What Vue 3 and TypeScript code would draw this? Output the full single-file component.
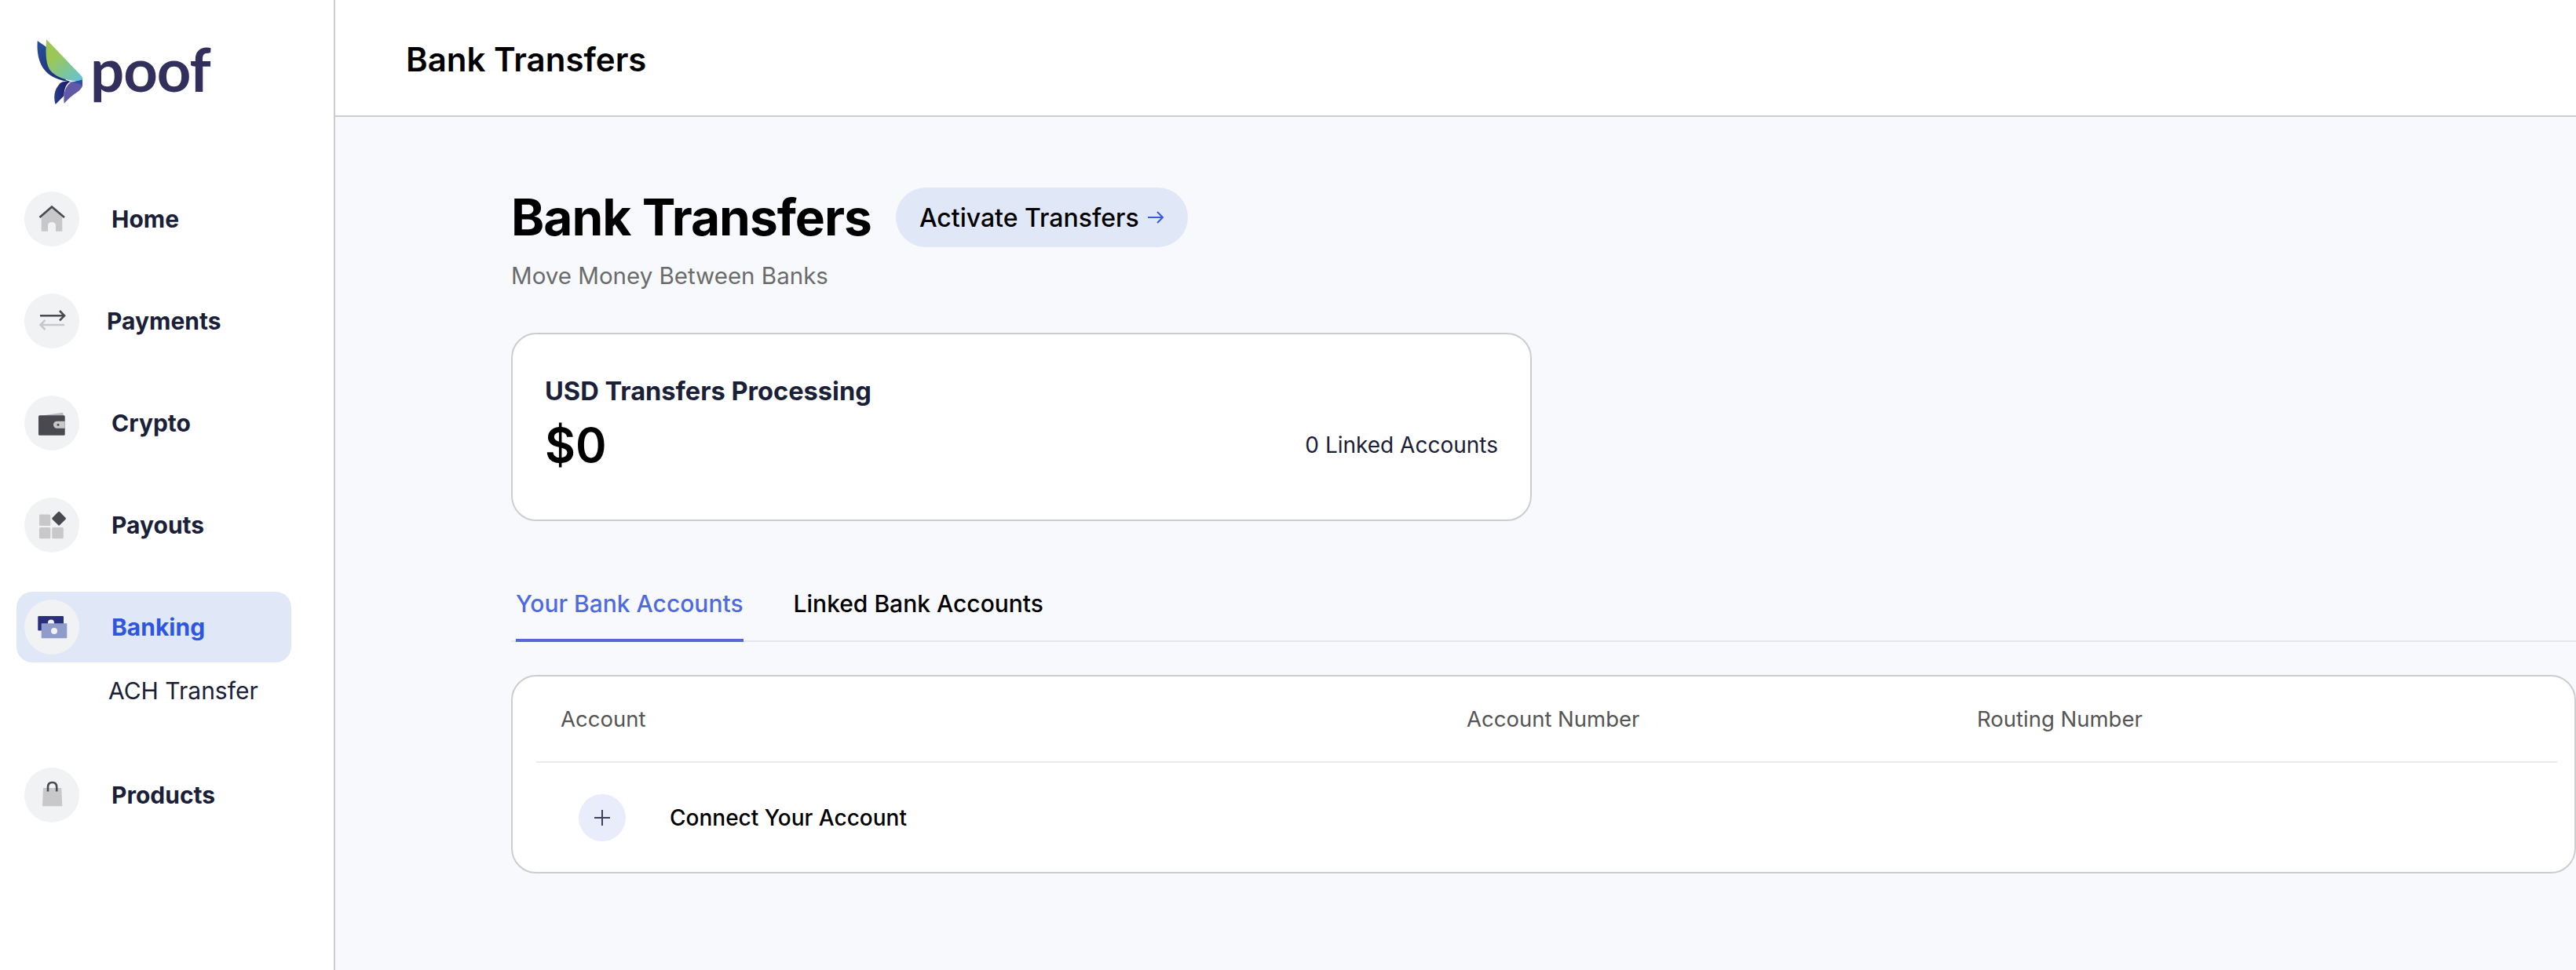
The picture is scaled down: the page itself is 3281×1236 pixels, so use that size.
<template>
  <div class="layout">
    <!-- sidebar -->
    <aside class="sidebar">
      <div class="logo">
        <svg class="logo-mark" width="72" height="90" viewBox="42 46 72 90">
          <defs>
            <linearGradient id="wingLeft" x1="0" y1="0" x2="1" y2="1">
              <stop offset="0" stop-color="#27509a" />
              <stop offset="1" stop-color="#1d2470" />
            </linearGradient>
            <linearGradient id="wingGreen" x1="0.35" y1="0.35" x2="0.85" y2="1">
              <stop offset="0" stop-color="#9cc756" />
              <stop offset="1" stop-color="#67c3cf" />
            </linearGradient>
            <linearGradient id="wingDark" x1="0" y1="0" x2="1" y2="0">
              <stop offset="0" stop-color="#2a3c8c" />
              <stop offset="1" stop-color="#17175f" />
            </linearGradient>
          </defs>
          <path d="M47.7 52L62 62L84 102L92 105C70 102 45 94 47.7 52Z" fill="url(#wingLeft)" />
          <path d="M59 50L103 96Q106 99 105 102C90 105 75 100 66 92C58 84 58 70 59 50Z" fill="url(#wingGreen)" />
          <path d="M70.7 133C68 124 69 115 75 108C77 105 79 104 82 104L89 104C84 108 82 112 81.5 122Z" fill="url(#wingDark)" />
          <path d="M81.7 132C81 122 81 112 90 105L105 102L105 110C102 116 97 118 92 122C88 125 85 128 81.7 132Z" fill="#5f59a8" />
          <path d="M90 105L105 101.5L105 109C102 107 97 105 90 105Z" fill="#2c50a6" />
        </svg>
        <span class="logo-text">poof</span>
      </div>

      <nav class="nav">
        <div v-for="item in navItems" :key="item.id" class="nav-group" :class="{ 'has-sub': item.sub }">
          <div class="nav-row" :class="{ active: item.active }">
            <span class="nav-icon">
              <svg width="70" height="70" viewBox="0 0 70 70">
                <template v-if="item.id === 'home'">
                  <path d="M21.7 31L35 20L48.3 31V50.7H40V43.5Q40 39 35 39Q30 39 30 43.5V50.7H21.7Z" fill="#c8c8cb" />
                  <path d="M19.5 33L35 19.5L51 33" fill="none" stroke="#4a4950" stroke-width="2.6" />
                </template>
                <template v-else-if="item.id === 'payments'">
                  <path d="M20 28.3H50M45 22L51 28.3L45 34.3" fill="none" stroke="#4a4950" stroke-width="2.6" />
                  <path d="M51 40H21M26.5 33.8L20.5 40L26.5 46" fill="none" stroke="#c8c8cb" stroke-width="2.6" />
                </template>
                <template v-else-if="item.id === 'crypto'">
                  <path d="M19 26L49 21.7L50.5 27Z" fill="#b9b9bd" />
                  <rect x="18" y="25.3" width="33.7" height="25.4" rx="1.5" fill="#4a4950" />
                  <path d="M41.5 32.7H51.7V41.7H41.5A4.5 4.5 0 0 1 41.5 32.7Z" fill="#c8c8cb" />
                  <circle cx="43" cy="37.2" r="1.5" fill="#4a4950" />
                </template>
                <template v-else-if="item.id === 'payouts'">
                  <rect x="19" y="21.5" width="14.3" height="14.5" rx="1.5" fill="#c8c8cb" />
                  <rect x="19" y="38" width="14.3" height="14.3" rx="1.5" fill="#c8c8cb" />
                  <rect x="35.3" y="38" width="14.5" height="14.3" rx="1.5" fill="#c8c8cb" />
                  <rect x="37.4" y="20" width="13.4" height="13.4" rx="1.5" transform="rotate(45 44.1 26.7)" fill="#4a4950" />
                </template>
                <template v-else-if="item.id === 'banking'">
                  <rect x="17.3" y="21" width="32.7" height="18.5" rx="1" fill="#2b2f7b" />
                  <circle cx="34" cy="29.5" r="4" fill="#f1f2f4" />
                  <rect x="21.7" y="30.3" width="32.6" height="19" rx="1" fill="#8f9bcb" />
                  <circle cx="38" cy="40" r="4" fill="#f1f2f4" />
                </template>
                <template v-else>
                  <path d="M24 26H47.3L48.3 49.3H23Z" fill="#c8c8cb" />
                  <path d="M30 30.5V25Q30 19 35.6 19Q41.2 19 41.2 25V30.5" fill="none" stroke="#4a4950" stroke-width="2.6" />
                </template>
              </svg>
            </span>
            <span class="nav-label" :class="{ shifted: item.id === 'payments' }">{{ item.label }}</span>
          </div>
          <div v-if="item.sub" class="nav-sub">{{ item.sub }}</div>
        </div>
      </nav>
    </aside>

    <div class="page">
      <header class="topbar">Bank Transfers</header>

      <main class="content">
        <div class="title-row">
          <h1 class="title">Bank Transfers</h1>
          <button class="activate">
            Activate Transfers
            <svg width="22" height="20" viewBox="0 0 22 20">
              <path d="M1 10H20M13 3L20 10L13 17" fill="none" stroke="#3a5be0" stroke-width="2" />
            </svg>
          </button>
        </div>
        <p class="subtitle">Move Money Between Banks</p>

        <section class="summary">
          <div class="summary-title">USD Transfers Processing</div>
          <div class="summary-row">
            <span class="summary-amount">$0</span>
            <span class="summary-linked">0 Linked Accounts</span>
          </div>
        </section>

        <div class="tabs">
          <button
            v-for="(tab, index) in tabs"
            :key="tab"
            class="tab"
            :class="{ active: activeTab === index }"
            @click="activeTab = index"
          >
            {{ tab }}
          </button>
        </div>

        <section class="accounts">
          <div class="accounts-head">
            <span>Account</span>
            <span>Account Number</span>
            <span>Routing Number</span>
          </div>
          <div class="accounts-row">
            <span class="add-btn">
              <svg width="22" height="22" viewBox="0 0 22 22">
                <path d="M11 1V21M1 11H21" fill="none" stroke="#3f4060" stroke-width="2" />
              </svg>
            </span>
            <span class="add-label">Connect Your Account</span>
          </div>
        </section>
      </main>
    </div>
  </div>
</template>

<script setup lang="ts">
import { ref } from "vue";

interface NavItem {
  id: string;
  label: string;
  active?: boolean;
  sub?: string;
}

const navItems: NavItem[] = [
  { id: "home", label: "Home" },
  { id: "payments", label: "Payments" },
  { id: "crypto", label: "Crypto" },
  { id: "payouts", label: "Payouts" },
  { id: "banking", label: "Banking", active: true, sub: "ACH Transfer" },
  { id: "products", label: "Products" },
];

const tabs = ["Your Bank Accounts", "Linked Bank Accounts"];
const activeTab = ref(0);
</script>

<style>
html,
body {
  margin: 0;
  background: #f8f9fd;
}
</style>

<style scoped>
.layout {
  display: flex;
  min-height: 1236px;
  font-family: Inter, "Liberation Sans", sans-serif;
  overflow: hidden;
}

/* sidebar */
.sidebar {
  flex: 0 0 427px;
  box-sizing: border-box;
  background: #fff;
  border-right: 2px solid #cdcdcf;
}

.logo {
  display: flex;
  align-items: flex-start;
  height: 234px;
  box-sizing: border-box;
  padding: 46px 0 0 42px;
}

.logo-text {
  margin: 2px 0 0 1px;
  font-family: Lato, sans-serif;
  font-size: 76px;
  line-height: 80px;
  font-weight: 700;
  letter-spacing: -1px;
  color: #322f5c;
}

.nav {
  display: flex;
  flex-direction: column;
  gap: 40px;
}

.nav-group.has-sub {
  padding-bottom: 28px;
}

.nav-row {
  display: flex;
  align-items: center;
  width: 350px;
  height: 90px;
  box-sizing: border-box;
  margin-left: 21px;
  padding-left: 10px;
  border-radius: 20px;
}

.nav-row.active {
  background: #e0e7f6;
}

.nav-icon {
  display: flex;
  width: 70px;
  height: 70px;
  border-radius: 50%;
  background: #f1f2f4;
}

.nav-label {
  margin-left: 41px;
  font-size: 30px;
  font-weight: 700;
  color: #1a2038;
}

.nav-label.shifted {
  margin-left: 35px;
}

.nav-row.active .nav-label {
  color: #2f56e0;
}

.nav-sub {
  margin: 16px 0 0 138px;
  font-size: 30px;
  line-height: 40px;
  color: #1a2038;
}

/* main column */
.page {
  flex: 1;
  min-width: 0;
}

.topbar {
  display: flex;
  align-items: center;
  height: 149px;
  box-sizing: border-box;
  padding: 3px 0 0 90px;
  background: #fff;
  border-bottom: 2px solid #cdcdcf;
  font-size: 42px;
  font-weight: 600;
  color: #000;
}

.content {
  padding: 90px 0 0 224px;
}

.title-row {
  display: flex;
  align-items: center;
  gap: 31px;
}

.title {
  margin: 0;
  font-size: 64px;
  line-height: 76px;
  font-weight: 700;
  letter-spacing: -1px;
  color: #000;
}

.activate {
  display: flex;
  align-items: center;
  gap: 10px;
  height: 76px;
  padding: 0 30px;
  border: none;
  border-radius: 38px;
  background: #e0e7f6;
  font-family: inherit;
  font-size: 32px;
  font-weight: 500;
  color: #000;
}

.subtitle {
  margin: 16px 0 0;
  font-size: 29.5px;
  line-height: 40px;
  color: #6b6b6b;
}

.summary {
  width: 1300px;
  height: 240px;
  box-sizing: border-box;
  margin-top: 53px;
  padding: 52px 41px 0;
  background: #fff;
  border: 2px solid #cdcdcf;
  border-radius: 32px;
}

.summary-title {
  font-size: 32.6px;
  line-height: 40px;
  font-weight: 700;
  color: #1a2038;
}

.summary-row {
  display: flex;
  align-items: center;
  justify-content: space-between;
  margin-top: 12px;
}

.summary-amount {
  font-size: 60px;
  line-height: 74px;
  font-weight: 600;
  color: #000;
}

.summary-linked {
  font-size: 28px;
  color: #1a2038;
}

.tabs {
  display: flex;
  gap: 64px;
  margin-top: 70px;
  padding-left: 6px;
  border-bottom: 2px solid #e6e7ec;
}

.tab {
  height: 84px;
  margin-bottom: -2px;
  padding: 0 0 10px;
  border: none;
  border-bottom: 4px solid transparent;
  background: none;
  font-family: inherit;
  font-size: 30px;
  font-weight: 500;
  color: #000;
}

.tab.active {
  border-bottom-color: #5568d4;
  color: #4f6ae0;
}

.accounts {
  height: 253px;
  box-sizing: border-box;
  margin-top: 42px;
  background: #fff;
  border: 2px solid #cdcdcf;
  border-radius: 32px;
}

.accounts-head {
  display: grid;
  grid-template-columns: 1154px 650px 1fr;
  align-items: center;
  height: 110px;
  box-sizing: border-box;
  margin: 0 22px 0 30px;
  padding-left: 31px;
  border-bottom: 2px solid #ebebed;
  font-size: 27.5px;
  color: #555;
}

.accounts-row {
  display: flex;
  align-items: center;
  height: 139px;
  padding-left: 84px;
}

.add-btn {
  display: flex;
  align-items: center;
  justify-content: center;
  width: 60px;
  height: 60px;
  border-radius: 50%;
  background: #e9ecfa;
}

.add-label {
  margin-left: 56px;
  font-size: 28px;
  font-weight: 500;
  color: #000;
}
</style>
